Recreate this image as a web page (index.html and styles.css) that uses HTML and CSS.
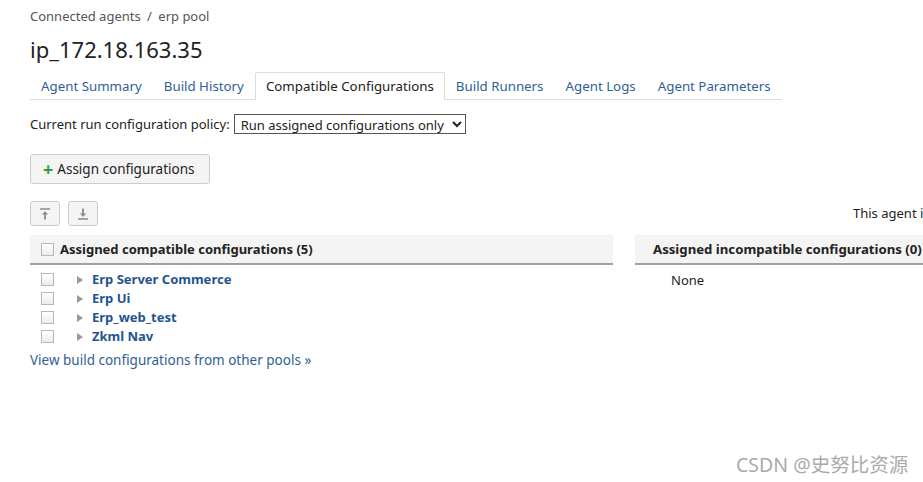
FILE: index.html
```html
<!DOCTYPE html>
<html lang="en">
<head>
    <meta charset="UTF-8">
    <title>ip_172.18.163.35</title>
<link rel="stylesheet" href="styles.css">
</head>
<body>
    <div class="page">
        <div class="crumbs">Connected agents <span class="sep">/</span> erp pool</div>
        <h1>ip_172.18.163.35</h1>

        <ul class="tabs">
            <li><a href="#">Agent Summary</a></li>
            <li><a href="#">Build History</a></li>
            <li class="active"><a href="#">Compatible Configurations</a></li>
            <li><a href="#">Build Runners</a></li>
            <li><a href="#">Agent Logs</a></li>
            <li><a href="#">Agent Parameters</a></li>
        </ul>

        <div class="policy">
            <label for="policy">Current run configuration policy:</label>
            <select id="policy">
                <option>Run assigned configurations only</option>
                <option>Run all compatible configurations</option>
            </select>
        </div>

        <button class="btn assign"><span class="plus">+</span> Assign configurations</button>

        <div class="grid">
            <div class="toolbar">
                <button class="btn icon" title="Move to top">
                    <svg width="14" height="14" viewBox="0 0 14 14"><path d="M2 2h10" stroke="#8a8a8a" stroke-width="1.5"/><path d="M7 12.5V6.5" stroke="#8a8a8a" stroke-width="1.8"/><path d="M3.8 7.5L7 4.2 10.2 7.5z" fill="#8a8a8a"/></svg>
                </button>
                <button class="btn icon" title="Move to bottom">
                    <svg width="14" height="14" viewBox="0 0 14 14"><path d="M2 12h10" stroke="#8a8a8a" stroke-width="1.5"/><path d="M7 1.5v6" stroke="#8a8a8a" stroke-width="1.8"/><path d="M3.8 6.5L7 9.8 10.2 6.5z" fill="#8a8a8a"/></svg>
                </button>
            </div>
            <div class="note">This agent is compatible with 5 configurations</div>

            <div class="panel">
                <div class="panel-head"><span class="box"></span>Assigned compatible configurations (5)</div>
                <ul class="configs">
                    <li><span class="box"></span><span class="arrow"></span><a href="#">Erp Server Commerce</a></li>
                    <li><span class="box"></span><span class="arrow"></span><a href="#">Erp Ui</a></li>
                    <li><span class="box"></span><span class="arrow"></span><a href="#">Erp_web_test</a></li>
                    <li><span class="box"></span><span class="arrow"></span><a href="#">Zkml Nav</a></li>
                </ul>
                <a class="more" href="#">View build configurations from other pools &raquo;</a>
            </div>

            <div class="panel">
                <div class="panel-head wide">Assigned incompatible configurations (0)</div>
                <div class="none">None</div>
            </div>
        </div>
    </div>
    <div class="mark">CSDN @史努比资源</div>
</body>
</html>
```

FILE: styles.css
```css
html, body {
    margin: 0;
    overflow: hidden;
}
body {
    font-family: "Noto Sans", "Noto Sans CJK SC", sans-serif;
    font-size: 13px;
    color: #222;
    background: #fff;
    height: 482px;
    position: relative;
}
a {
    text-decoration: none;
    color: #1f5d99;
}
.page {
    padding: 6px 0 0 30px;
    width: 1000px;
}
.crumbs {
    color: #555;
    line-height: 20px;
}
.crumbs .sep {
    margin: 0 3px;
}
h1 {
    font-size: 22px;
    font-weight: normal;
    margin: 8px 0 0;
    line-height: 30px;
}
.tabs {
    list-style: none;
    margin: 8px 0 0;
    padding: 0;
    display: flex;
    width: 752px;
    border-bottom: 1px solid #ddd;
}
.tabs li {
    flex: none;
    white-space: nowrap;
    border: 1px solid transparent;
    border-bottom: none;
    margin-bottom: -1px;
    border-radius: 2px 2px 0 0;
}
.tabs li a {
    display: block;
    padding: 0 10px;
    line-height: 26px;
    font-size: 13.3px;
    color: #2f5f95;
}
.tabs li.active {
    border-color: #ddd;
    background: #fff;
    padding-bottom: 1px;
}
.tabs li.active a {
    color: #222;
}
.policy {
    margin-top: 14px;
    display: flex;
    align-items: center;
    gap: 4px;
}
.policy select {
    font-family: inherit;
    font-size: 13px;
    height: 20px;
    border: 1px solid #555;
    border-radius: 0;
    background: #fff;
    color: #222;
    padding: 0 2px;
}
.btn {
    font-family: inherit;
    font-size: 13px;
    background: #f4f4f4;
    border: 1px solid #ccc;
    border-radius: 3px;
    color: #222;
    cursor: pointer;
}
.assign {
    margin-top: 20px;
    height: 30px;
    padding: 0 12px;
    display: flex;
    align-items: center;
    width: 180px;
    font-size: 13.5px;
}
.plus {
    color: #2e9e45;
    font-size: 18px;
    font-weight: bold;
    margin-right: 4px;
    line-height: 1;
}
.grid {
    display: grid;
    grid-template-columns: 583px 300px;
    column-gap: 22px;
    margin-top: 17px;
}
.toolbar {
    display: flex;
    gap: 8px;
}
.btn.icon {
    width: 30px;
    height: 25px;
    padding: 0;
    display: flex;
    align-items: center;
    justify-content: center;
}
.note {
    padding: 3px 0 0 218px;
    white-space: nowrap;
}
.panel {
    margin-top: 9px;
}
.panel-head {
    background: #f4f4f4;
    border-bottom: 2px solid #a0a0a0;
    font-weight: bold;
    line-height: 28px;
    padding-left: 11px;
    display: flex;
    align-items: center;
    white-space: nowrap;
}
.panel-head.wide {
    padding-left: 18px;
    font-size: 13.2px;
}
.panel-head .box {
    margin-right: 6px;
}
.box {
    width: 11px;
    height: 11px;
    border: 1px solid #b8b8b8;
    background: linear-gradient(#fff, #ececec);
    display: inline-block;
    flex: none;
}
.configs {
    list-style: none;
    margin: 5px 0 0;
    padding: 0 0 0 11px;
}
.configs li {
    display: flex;
    align-items: center;
    line-height: 19px;
}
.arrow {
    width: 0;
    height: 0;
    border-left: 6px solid #999;
    border-top: 4px solid transparent;
    border-bottom: 4px solid transparent;
    margin: 0 9px 0 23px;
}
.configs a {
    font-weight: bold;
    color: #1f5490;
}
.more {
    display: block;
    margin-top: 4px;
    line-height: 20px;
    color: #2f5f95;
    font-size: 13.5px;
}
.none {
    padding: 6px 0 0 36px;
    line-height: 19px;
}
.mark {
    position: absolute;
    left: 736px;
    top: 449px;
    font-size: 19.5px;
    color: #aaa;
}
```
